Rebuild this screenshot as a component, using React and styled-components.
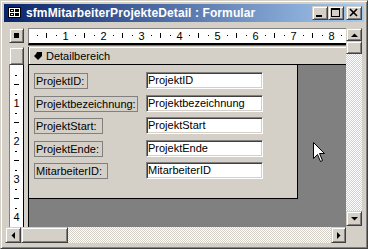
import React from 'react';
import styled, { createGlobalStyle, css } from 'styled-components';

const GlobalStyle = createGlobalStyle`
  html, body { margin: 0; padding: 0; background: #fff; }
  body { font-family: "Liberation Sans", Arial, sans-serif; }
  * { box-sizing: border-box; }
`;

const raised = css`
  border: 1px solid;
  border-color: #d4d0c8 #404040 #404040 #d4d0c8;
  box-shadow: inset 1px 1px #fff, inset -1px -1px #808080;
  background: #d4d0c8;
`;

const Window = styled.div`
  position: relative;
  width: 368px;
  height: 249px;
  ${raised}
  padding: 3px;
  display: flex;
  flex-direction: column;
`;

const TitleBar = styled.div`
  height: 18px;
  flex: none;
  display: flex;
  align-items: center;
  padding: 0 2px;
  background: linear-gradient(to right, #0a246a, #a6caf0);
`;

const TitleText = styled.span`
  margin-left: 4px;
  color: #fff;
  font-weight: bold;
  font-size: 12px;
  letter-spacing: 0.1px;
  white-space: nowrap;
`;

const TitleButtons = styled.div`
  margin-left: auto;
  display: flex;
`;

const CapButton = styled.div`
  width: 16px;
  height: 14px;
  ${raised}
  margin-left: ${p => p.$gap || 0}px;
  display: flex;
`;

const Body = styled.div`
  flex: 1;
  min-height: 0;
  display: grid;
  grid-template-columns: 1fr 16px;
  grid-template-rows: 1fr 16px;
  padding: 5px 2px 2px 1px;
`;

const Surface = styled.div`
  min-height: 0;
  display: grid;
  grid-template-columns: 4px 15px 4px 1fr;
  grid-template-rows: 20px 18px 1fr;
`;

const CornerBox = styled.div`
  grid-column: 2;
  grid-row: 1;
  margin-top: 1px;
  height: 15px;
  ${raised}
  display: flex;
  align-items: center;
  justify-content: center;
  &::after {
    content: "";
    width: 5px;
    height: 5px;
    background: #000;
  }
`;

const HRulerBar = styled.div`
  grid-column: 4;
  grid-row: 1;
  margin-top: 1px;
  height: 17px;
  background: #fff;
  border-top: 1px solid #808080;
  border-left: 1px solid #808080;
  border-bottom: 2px solid #000;
  box-shadow: 0 1px #808080;
  overflow: hidden;
`;

const SectionSelector = styled.div`
  grid-column: 2;
  grid-row: 2;
  ${raised}
`;

const SectionHeader = styled.div`
  grid-column: 4;
  grid-row: 2;
  display: flex;
  align-items: center;
  gap: 4px;
  padding-left: 5px;
  background: #d4d0c8;
  border-left: 1px solid #404040;
  border-bottom: 1px solid #000;
  box-shadow: inset 1px 1px #fff;
  font-size: 11px;
  color: #000;
`;

const VRulerBar = styled.div`
  grid-column: 2;
  grid-row: 3;
  background: #fff;
  border-left: 1px solid #808080;
  border-right: 1px solid #000;
  overflow: hidden;
`;

const DetailArea = styled.div`
  grid-column: 4;
  grid-row: 3;
  background: #808080;
  border-left: 1px solid #000;
  overflow: hidden;
`;

const FormSection = styled.div`
  width: 269px;
  height: 134px;
  background: #d4d0c8;
  border-right: 1px solid #000;
  border-bottom: 1px solid #000;
  display: grid;
  grid-template-columns: 112px 117px;
  grid-auto-rows: 17px;
  row-gap: 5.5px;
  align-content: start;
  padding: 7px 0 0 5px;
`;

const FieldLabel = styled.div`
  justify-self: start;
  align-self: end;
  width: ${p => p.$w}px;
  height: 16px;
  border: 1px solid #808080;
  padding-left: 1px;
  font-size: 11px;
  line-height: 14px;
  color: #000;
  white-space: nowrap;
`;

const FieldBox = styled.div`
  background: #fff;
  border: 1px solid;
  border-color: #808080 #fff #fff #808080;
  box-shadow: inset 1px 1px #404040, inset -1px -1px #d4d0c8;
  padding-left: 1px;
  font-size: 11px;
  line-height: 15px;
  color: #000;
  white-space: nowrap;
`;

const VScroll = styled.div`
  display: flex;
  flex-direction: column;
  padding: 1px 0;
`;

const HScroll = styled.div`
  display: flex;
`;

const ScrollButton = styled.div`
  flex: none;
  width: ${p => p.$w || 16}px;
  height: ${p => p.$h || 16}px;
  ${raised}
  display: flex;
  align-items: center;
  justify-content: center;
`;

const Track = styled.div`
  flex: 1;
  background: repeating-conic-gradient(#d4d0c8 0% 25%, #fff 0% 50%) 0 0 / 2px 2px;
`;

const Corner = styled.div`
  background: #d4d0c8;
`;

const Cursor = styled.svg`
  position: absolute;
  left: 312px;
  top: 141px;
`;

const fields = [
  { label: 'ProjektID:', w: 54, value: 'ProjektID' },
  { label: 'Projektbezeichnung:', w: 104, value: 'Projektbezeichnung' },
  { label: 'ProjektStart:', w: 69, value: 'ProjektStart' },
  { label: 'ProjektEnde:', w: 69, value: 'ProjektEnde' },
  { label: 'MitarbeiterID:', w: 74, value: 'MitarbeiterID' },
];

const FormIcon = () => (
  <svg width="14" height="12" viewBox="0 0 14 12" style={{ marginLeft: 2 }}>
    <rect x="0.5" y="0.5" width="12" height="10" fill="#fff" stroke="#000" />
    <rect x="2.5" y="2.5" width="3" height="2" fill="none" stroke="#000" />
    <rect x="7" y="2" width="4" height="3" fill="#000" />
    <rect x="2.5" y="6.5" width="3" height="2" fill="none" stroke="#000" />
    <rect x="7" y="6" width="4" height="3" fill="#000" />
  </svg>
);

const Glyph = ({ type }) => (
  <svg width="14" height="12" viewBox="0 0 14 12">
    {type === 'min' && <rect x="3" y="8" width="6" height="2" fill="#000" />}
    {type === 'max' && (
      <g fill="none" stroke="#000" shapeRendering="crispEdges">
        <rect x="2.5" y="1.5" width="8" height="8" />
        <line x1="2" y1="2.5" x2="11" y2="2.5" />
      </g>
    )}
    {type === 'close' && (
      <g stroke="#000" strokeWidth="1.6">
        <line x1="3" y1="2" x2="10" y2="9" />
        <line x1="10" y1="2" x2="3" y2="9" />
      </g>
    )}
  </svg>
);

const Arrow = ({ dir }) => {
  const pts = {
    up: '0,4 3.5,0.5 7,4',
    down: '0,0 7,0 3.5,3.5',
    left: '4,0 4,7 0.5,3.5',
    right: '0,0 0,7 3.5,3.5',
  }[dir];
  const vert = dir === 'up' || dir === 'down';
  return (
    <svg width={vert ? 7 : 4} height={vert ? 4 : 7}>
      <polygon points={pts} fill="#000" />
    </svg>
  );
};

const HRuler = () => {
  const marks = [];
  for (let k = 1; k <= 34; k++) {
    const x = Math.round(27 + 9.5 * k) - 29;
    if (k % 4 === 0) {
      marks.push(
        <text key={k} x={x + 0.5} y={11} textAnchor="middle">{k / 4}</text>
      );
    } else if (k % 4 === 2) {
      marks.push(<rect key={k} x={x} y={4} width={1} height={5} />);
    } else {
      marks.push(<rect key={k} x={x} y={6} width={1} height={1} />);
    }
  }
  return (
    <svg width="320" height="14" fontFamily="Liberation Sans, Arial, sans-serif" fontSize="11" fill="#000">
      {marks}
    </svg>
  );
};

const VRuler = () => {
  const marks = [];
  for (let k = 1; k <= 17; k++) {
    const y = Math.round(9.5 * k);
    if (k % 4 === 0) {
      marks.push(
        <text key={k} x={6.5} y={y + 4} textAnchor="middle">{k / 4}</text>
      );
    } else if (k % 4 === 2) {
      marks.push(<rect key={k} x={4} y={y} width={5} height={1} />);
    } else {
      marks.push(<rect key={k} x={5} y={y} width={2} height={1} />);
    }
  }
  return (
    <svg width="13" height="162" fontFamily="Liberation Sans, Arial, sans-serif" fontSize="11" fill="#000">
      {marks}
    </svg>
  );
};

export default function App() {
  return (
    <>
      <GlobalStyle />
      <Window>
        <TitleBar>
          <FormIcon />
          <TitleText>sfmMitarbeiterProjekteDetail : Formular</TitleText>
          <TitleButtons>
            <CapButton><Glyph type="min" /></CapButton>
            <CapButton><Glyph type="max" /></CapButton>
            <CapButton $gap={2}><Glyph type="close" /></CapButton>
          </TitleButtons>
        </TitleBar>
        <Body>
          <Surface>
            <CornerBox />
            <HRulerBar><HRuler /></HRulerBar>
            <SectionSelector />
            <SectionHeader>
              <svg width="8" height="8" viewBox="0 0 8 8">
                <path d="M3 0 H8 V4 L4 8 L0 4 L2 2 Z" fill="#000" />
              </svg>
              Detailbereich
            </SectionHeader>
            <VRulerBar><VRuler /></VRulerBar>
            <DetailArea>
              <FormSection>
                {fields.map(f => (
                  <React.Fragment key={f.label}>
                    <FieldLabel $w={f.w}>{f.label}</FieldLabel>
                    <FieldBox>{f.value}</FieldBox>
                  </React.Fragment>
                ))}
              </FormSection>
            </DetailArea>
          </Surface>
          <VScroll>
            <ScrollButton $h={13}><Arrow dir="up" /></ScrollButton>
            <ScrollButton $h={13} />
            <Track />
            <ScrollButton $h={15}><Arrow dir="down" /></ScrollButton>
          </VScroll>
          <HScroll>
            <ScrollButton><Arrow dir="left" /></ScrollButton>
            <ScrollButton $w={47} />
            <Track />
            <ScrollButton $w={15}><Arrow dir="right" /></ScrollButton>
          </HScroll>
          <Corner />
        </Body>
        <Cursor width="13" height="21" viewBox="0 0 13 21">
          <path d="M0.5 0.5 L0.5 16.5 L4.5 12.5 L7.5 19.5 L9.5 18.5 L6.5 11.5 L11.5 11.5 Z" fill="#fff" stroke="#000" />
        </Cursor>
      </Window>
    </>
  );
}
